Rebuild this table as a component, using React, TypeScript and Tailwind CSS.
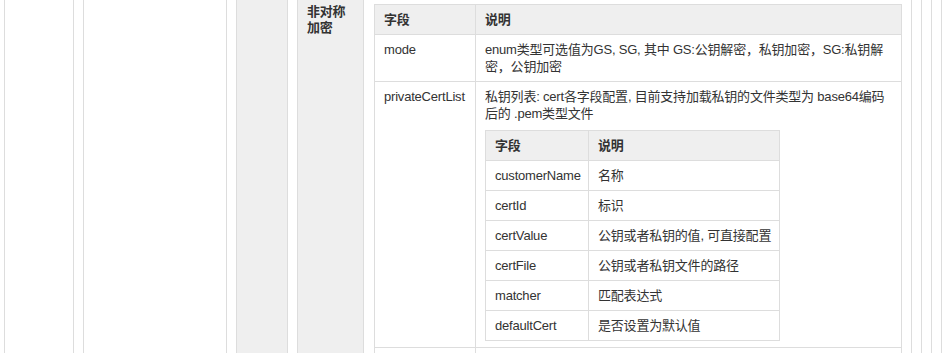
import React from "react";

const certFields: [string, string][] = [
  ["customerName", "名称"],
  ["certId", "标识"],
  ["certValue", "公钥或者私钥的值, 可直接配置"],
  ["certFile", "公钥或者私钥文件的路径"],
  ["matcher", "匹配表达式"],
  ["defaultCert", "是否设置为默认值"],
];

function CertTable() {
  return (
    <table className="mt-[8px] w-[295px] table-fixed border-separate border-spacing-0 border-l border-t border-[#ddd] whitespace-nowrap">
      <thead>
        <tr className="bg-[#efefef]">
          <th className="w-[103px] border-b border-r border-[#ddd] px-[9px] py-[6px] text-left font-bold">字段</th>
          <th className="border-b border-r border-[#ddd] px-[9px] py-[6px] text-left font-bold">说明</th>
        </tr>
      </thead>
      <tbody>
        {certFields.map(([name, desc]) => (
          <tr key={name}>
            <td className="border-b border-r border-[#ddd] px-[9px] py-[6px]">{name}</td>
            <td className="border-b border-r border-[#ddd] px-[9px] py-[6px]">{desc}</td>
          </tr>
        ))}
      </tbody>
    </table>
  );
}

function ModeTable() {
  return (
    <table className="w-full table-fixed border-separate border-spacing-0 border-l border-t border-[#ddd]">
      <thead>
        <tr className="bg-[#efefef]">
          <th className="w-[101px] border-b border-r border-[#ddd] px-[9px] py-[6px] text-left font-bold">字段</th>
          <th className="border-b border-r border-[#ddd] px-[9px] py-[6px] text-left font-bold">说明</th>
        </tr>
      </thead>
      <tbody>
        <tr>
          <td className="border-b border-r border-[#ddd] px-[9px] py-[6px] align-top">mode</td>
          <td className="whitespace-nowrap border-b border-r border-[#ddd] px-[9px] py-[6px] align-top">
            enum类型可选值为GS, SG, 其中 GS:公钥解密，私钥加密，SG:私钥解
            <br />
            密，公钥加密
          </td>
        </tr>
        <tr>
          <td className="border-b border-r border-[#ddd] px-[9px] py-[6px] align-top">privateCertList</td>
          <td className="border-b border-r border-[#ddd] px-[9px] py-[6px] align-top">
            <div className="whitespace-nowrap">
              私钥列表: cert各字段配置, 目前支持加载私钥的文件类型为 base64编码
              <br />
              后的 .pem类型文件
            </div>
            <CertTable />
          </td>
        </tr>
        <tr>
          <td className="h-[40px] border-b border-r border-[#ddd]" />
          <td className="h-[40px] border-b border-r border-[#ddd]" />
        </tr>
      </tbody>
    </table>
  );
}

export default function App() {
  return (
    <div className="h-[353px] w-[947px] overflow-hidden bg-white font-['Liberation_Sans','Noto_Sans_CJK_SC',sans-serif] text-[13px] leading-[17px] tracking-[-0.2px] text-[#333]">
      {/* outermost config table */}
      <div className="ml-[4px] flex h-full w-[938px] border-x border-[#ddd]">
        <div className="w-[69px] shrink-0 border-r border-[#ddd]" />
        <div className="min-w-0 flex-1 px-[9px]">
          {/* second level */}
          <div className="flex h-full border-x border-[#ddd]">
            <div className="w-[143px] shrink-0 border-r border-[#ddd]" />
            <div className="min-w-0 flex-1 px-[9px]">
              {/* third level */}
              <div className="flex h-full border-x border-[#ddd]">
                <div className="w-[51px] shrink-0 border-r border-[#ddd] bg-[#efefef]" />
                <div className="min-w-0 flex-1 px-[9px]">
                  {/* encryption options */}
                  <div className="flex h-full border-x border-[#ddd]">
                    <div className="w-[66px] shrink-0 border-r border-[#ddd] bg-[#efefef] px-[9px] pt-[4px] font-bold leading-[16px]">
                      非对称加密
                    </div>
                    <div className="min-w-0 flex-1 pl-[10px] pr-[9px] pt-[4px]">
                      <ModeTable />
                    </div>
                  </div>
                </div>
              </div>
            </div>
          </div>
        </div>
      </div>
    </div>
  );
}
